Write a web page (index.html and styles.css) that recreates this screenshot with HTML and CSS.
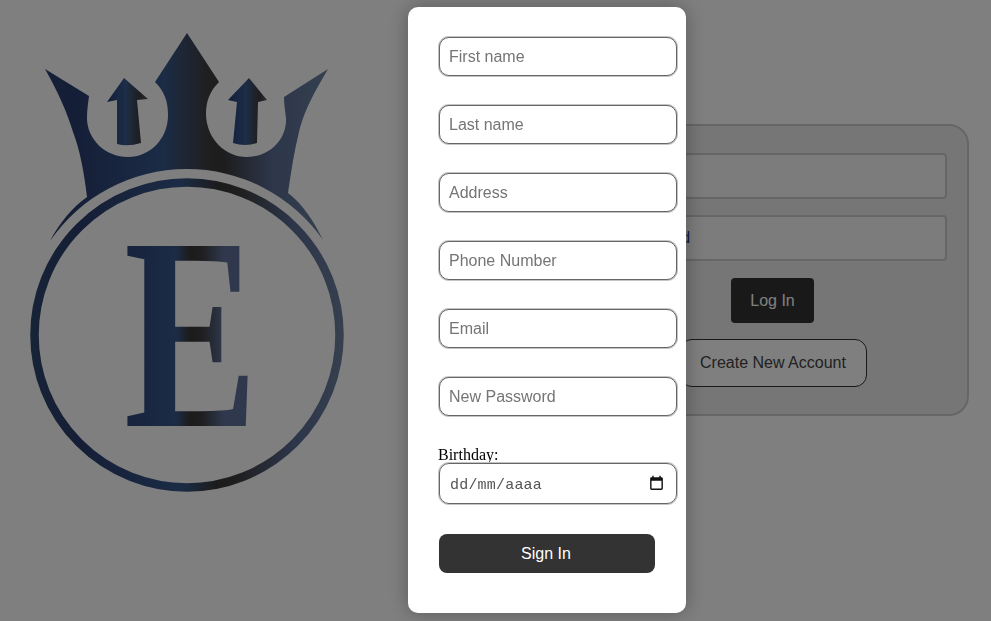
FILE: index.html
```html
<!DOCTYPE html>
<html lang="es">
<head>
  <meta charset="UTF-8">
  <meta name="viewport" content="width=device-width, initial-scale=1.0">
  <title>Sign In</title>
  <link rel="stylesheet" href="styles.css">
</head>
<body>
  <div class="page">
    <svg class="logo" viewBox="0 0 387 621" aria-label="Logo">
      <defs>
        <linearGradient id="metal" x1="0" x2="1" y1="0" y2="0">
          <stop offset="0" stop-color="#2c4070"/>
          <stop offset="0.1" stop-color="#2a3c6e"/>
          <stop offset="0.42" stop-color="#38588c"/>
          <stop offset="0.58" stop-color="#3e3e3e"/>
          <stop offset="0.63" stop-color="#3a3a3a"/>
          <stop offset="0.8" stop-color="#5a6c94"/>
          <stop offset="1" stop-color="#68809f"/>
        </linearGradient>
        <linearGradient id="shaft" x1="0" x2="1" y1="0" y2="0">
          <stop offset="0" stop-color="#243c78"/>
          <stop offset="0.45" stop-color="#3a5c90"/>
          <stop offset="0.8" stop-color="#3c3c3c"/>
          <stop offset="1" stop-color="#5a5a5a"/>
        </linearGradient>
        <linearGradient id="ring" x1="0" x2="1" y1="0" y2="0">
          <stop offset="0" stop-color="#2e466e"/>
          <stop offset="0.15" stop-color="#2a3c6c"/>
          <stop offset="0.48" stop-color="#38588c"/>
          <stop offset="0.6" stop-color="#383838"/>
          <stop offset="0.66" stop-color="#3c3c3c"/>
          <stop offset="0.85" stop-color="#5a6c94"/>
          <stop offset="1" stop-color="#6a7e9c"/>
        </linearGradient>
        <linearGradient id="letter" gradientUnits="userSpaceOnUse" x1="0" x2="170" y1="0" y2="0">
          <stop offset="0" stop-color="#304476"/>
          <stop offset="0.42" stop-color="#38588c"/>
          <stop offset="0.53" stop-color="#383838"/>
          <stop offset="0.62" stop-color="#3c3c3c"/>
          <stop offset="0.8" stop-color="#5e7098"/>
          <stop offset="1" stop-color="#5e7098"/>
        </linearGradient>
      </defs>
      <path fill="url(#metal)" d="M187 33 L219 82 C209 92 206 102 206 115 C207 139 225 157 247 157 C270 157 287 139 286 118 C285 110 284 104 284 97 L328 69 C312 96 304 112 299 132 C294 152 291 172 288 193 C303 204 314 222 323 240 A166 166 0 0 0 50 241 C60 222 72 208 87 197 C84 172 80 150 73 132 C67 112 58 92 45 69 L89 96 C88 104 87 110 87 118 C87 139 105 157 128 157 C150 157 168 139 168 115 C168 102 165 92 155 82 Z"/>
      <path fill="url(#shaft)" d="M124 78 L148 99 L137 100 L141 143 Q128 147 117 144 L117 100 L107 102 Z"/>
      <path fill="url(#shaft)" d="M249 78 L267 100 L258 102 L257 143 Q245 147 233 143 L237 102 L228 100 Z"/>
      <circle cx="187" cy="335" r="152.5" fill="none" stroke="url(#ring)" stroke-width="8.5"/>
      <text class="logo-letter" transform="translate(124 426) scale(0.73 1)" fill="url(#letter)">E</text>
    </svg>
    <form class="login-box">
      <input class="login-input" type="text" placeholder="Email">
      <input class="login-input" type="password" placeholder="Password">
      <button class="login-btn" type="button">Log In</button>
      <button class="create-btn" type="button">Create New Account</button>
    </form>
  </div>

  <div class="overlay">
    <form class="modal">
      <input class="field" type="text" placeholder="First name">
      <input class="field" type="text" placeholder="Last name">
      <input class="field" type="text" placeholder="Address">
      <input class="field" type="text" placeholder="Phone Number">
      <input class="field" type="text" placeholder="Email">
      <input class="field" type="password" placeholder="New Password">
      <div class="birthday">
        <label class="birthday-label" for="birthday">Birthday:</label>
        <div class="date-box">
          <input class="date-input" id="birthday" type="text" placeholder="dd/mm/aaaa">
          <svg class="date-icon" viewBox="0 0 24 24" width="17" height="17">
            <path d="M19 3h-1V1h-2v2H8V1H6v2H5c-1.1 0-2 .9-2 2v14c0 1.1.9 2 2 2h14c1.1 0 2-.9 2-2V5c0-1.1-.9-2-2-2zm0 16H5V8h14v11z"/>
          </svg>
        </div>
      </div>
      <button class="signin-btn" type="button">Sign In</button>
    </form>
  </div>
</body>
</html>
```

FILE: styles.css
```css
* {
  box-sizing: border-box;
}
html, body {
  height: 100%;
}
body {
  margin: 0;
  background-color: #ffffff;
  font-family: 'Liberation Sans', Arial, sans-serif;
  overflow: hidden;
}
.page {
  display: flex;
  justify-content: space-between;
  align-items: flex-start;
  padding-right: 22px;
}
.logo {
  display: block;
  width: 387px;
  height: 621px;
  filter: blur(0.4px);
}
.logo-letter {
  font-family: 'Liberation Serif', serif;
  font-weight: bold;
  font-size: 275px;
}
.login-box {
  width: 392px;
  margin-top: 124px;
  padding: 27px 20px 27px;
  display: flex;
  flex-direction: column;
  align-items: center;
  border: 2px solid #cccccc;
  border-radius: 20px;
  background-color: #ececec;
}
.login-input {
  width: 100%;
  height: 46px;
  margin-bottom: 16px;
  padding: 0 19px;
  font-family: inherit;
  font-size: 16px;
  border: 2px solid #cccccc;
  border-radius: 4px;
  background-color: #f8f8f8;
}
.login-input::placeholder {
  color: #2c3f8c;
}
.login-btn {
  width: 83px;
  height: 45px;
  margin: 1px 1px 16px 0;
  font-family: inherit;
  font-size: 16px;
  color: #ffffff;
  background-color: #333333;
  border: none;
  border-radius: 4px;
}
.create-btn {
  width: 187px;
  height: 48px;
  font-family: inherit;
  font-size: 16px;
  color: #444444;
  background-color: #ffffff;
  border: 1px solid #333333;
  border-radius: 12px;
}
.overlay {
  position: fixed;
  top: 0;
  left: 0;
  width: 100%;
  height: 100%;
  padding: 7px 0 0 408px;
  background-color: rgba(0, 0, 0, 0.5);
}
.modal {
  width: 278px;
  height: 606px;
  padding: 29px 9px 0 30px;
  display: flex;
  flex-direction: column;
  background-color: #ffffff;
  border-radius: 10px;
  box-shadow: 0 0 20px rgba(0, 0, 0, 0.3);
}
.field {
  width: 238px;
  height: 39px;
  margin: 1px 0 28px 1px;
  padding: 0 9px;
  font-family: inherit;
  font-size: 16px;
  border: 1px solid #666666;
  border-radius: 10px;
  box-shadow: 0 0 0 1px #c4c4c4;
  outline: none;
}
.field::placeholder {
  color: #757575;
}
.birthday {
  display: flex;
  flex-direction: column;
}
.birthday-label {
  height: 19px;
  line-height: 22px;
  font-family: 'Liberation Serif', serif;
  font-size: 16px;
  color: #000000;
}
.date-box {
  width: 238px;
  height: 41px;
  margin: 0 0 1px 1px;
  padding: 0 11px 0 10px;
  display: flex;
  align-items: center;
  justify-content: space-between;
  border: 1px solid #666666;
  border-radius: 10px;
  box-shadow: 0 0 0 1px #c4c4c4;
}
.date-input {
  width: 150px;
  padding: 3px 0 0;
  font-family: 'Liberation Mono', monospace;
  font-size: 15px;
  letter-spacing: 0.2px;
  border: none;
  outline: none;
}
.date-input::placeholder {
  color: #555555;
}
.date-icon {
  display: block;
  fill: #111111;
}
.signin-btn {
  width: 216px;
  height: 39px;
  margin: 29px 0 0 1px;
  padding: 0 2px 0 0;
  font-family: inherit;
  font-size: 16px;
  color: #ffffff;
  background-color: #333333;
  border: none;
  border-radius: 8px;
}
```
